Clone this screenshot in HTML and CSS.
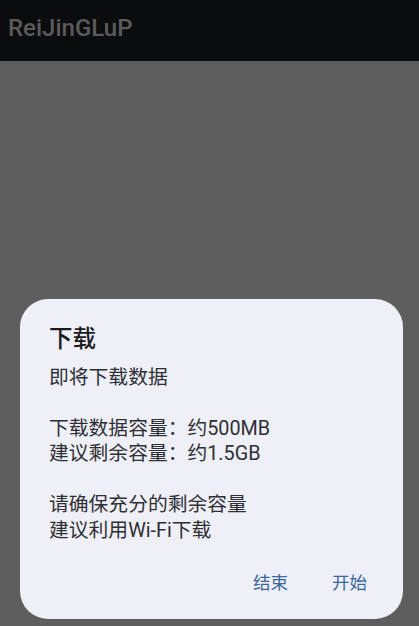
FILE: index.html
```html
<!DOCTYPE html>
<html lang="zh-CN">
<head>
<meta charset="utf-8">
<link rel="stylesheet" href="styles.css">
</head>
<body>
<div class="app">
  <header class="appbar"><span class="apptitle">ReiJinGLuP</span></header>
  <div class="scrim">
    <div class="dialog" role="dialog">
      <h2 class="dlg-title">下载</h2>
      <div class="dlg-body">
        <p>即将下载数据</p>
        <p class="blank">&nbsp;</p>
        <p>下载数据容量：约500MB</p>
        <p>建议剩余容量：约1.5GB</p>
        <p class="blank">&nbsp;</p>
        <p>请确保充分的剩余容量</p>
        <p>建议利用Wi-Fi下载</p>
      </div>
      <div class="dlg-actions">
        <button class="btn">结束</button>
        <button class="btn">开始</button>
      </div>
    </div>
  </div>
</div>
</body>
</html>
```
FILE: styles.css
```css
html, body {
  margin: 0;
  padding: 0;
}
body {
  width: 419px;
  height: 626px;
  overflow: hidden;
  font-family: Roboto, "Noto Sans CJK SC", sans-serif;
}
.app {
  display: flex;
  flex-direction: column;
  height: 626px;
}
.appbar {
  height: 61px;
  box-sizing: border-box;
  background: #0b0c0e;
  padding: 14px 0 0 8px;
}
.apptitle {
  display: block;
  font-size: 24px;
  font-weight: 500;
  line-height: 28px;
  color: #5b5b5c;
}
.scrim {
  flex: 1;
  background: #5e5e5f;
  display: flex;
  flex-direction: column;
  justify-content: flex-end;
  padding: 0 16px 7px 20px;
}
.dialog {
  background: #eff0f7;
  border-radius: 28px;
  padding: 24px 20px 16px 29px;
  display: flex;
  flex-direction: column;
}
.dlg-title {
  margin: 0;
  font-size: 23.5px;
  font-weight: 500;
  line-height: 32px;
  color: #1b1b1f;
}
.dlg-body {
  margin-top: 10px;
  font-size: 19.8px;
  line-height: 25.5px;
  color: #2e2f34;
}
.dlg-body p {
  margin: 0;
}
.dlg-actions {
  margin-top: 20px;
  display: flex;
  justify-content: flex-end;
  gap: 12px;
}
.btn {
  border: none;
  background: none;
  font-family: inherit;
  font-size: 17.5px;
  font-weight: 400;
  line-height: 40px;
  height: 40px;
  padding: 0 16px;
  color: #3b679c;
}
```
